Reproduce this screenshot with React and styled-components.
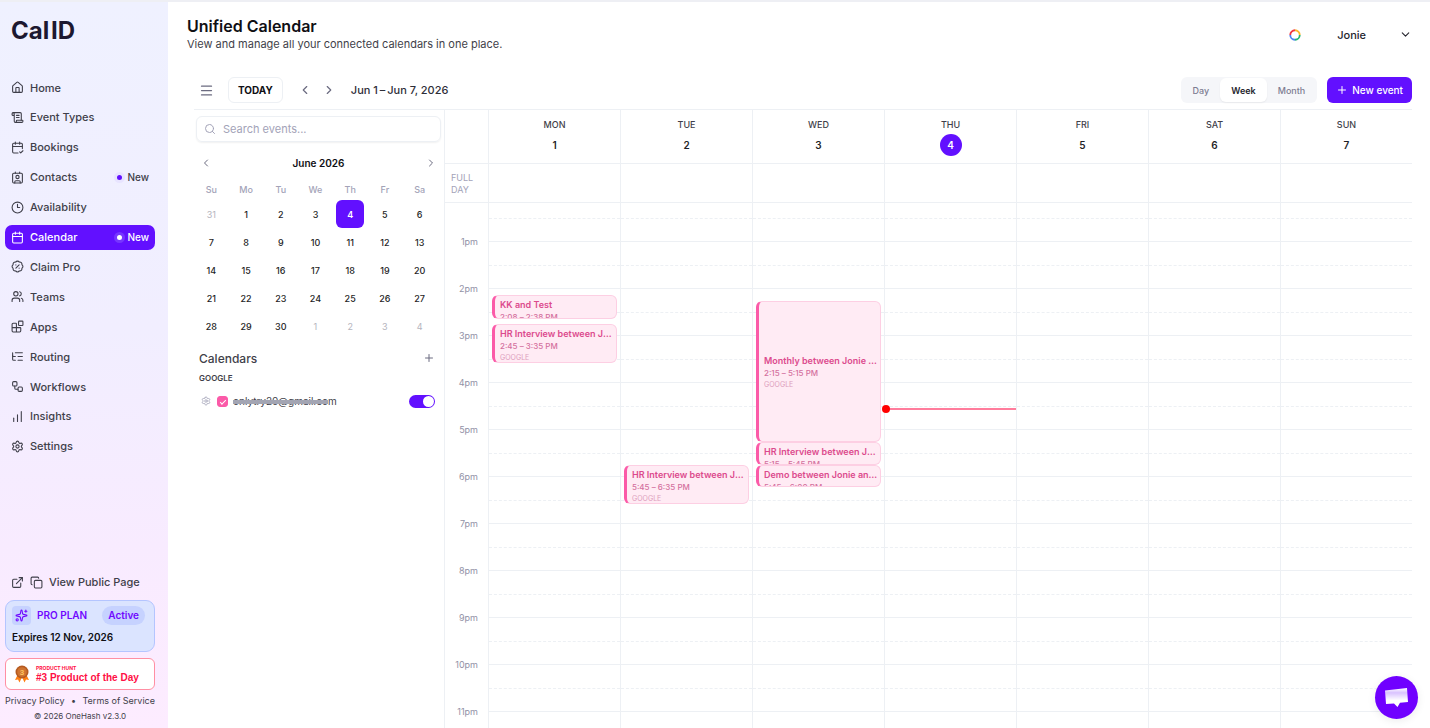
import React, { useState } from "react";
import styled, { createGlobalStyle, css } from "styled-components";
import {
  House, ScrollText, CalendarCheck2, Contact, Clock3, Calendar, BadgePercent, Users, Blocks,
  ListTree, Workflow, ChartNoAxesColumnIncreasing, Settings, ExternalLink, Copy, Sparkles,
  Menu, ChevronLeft, ChevronRight, ChevronDown, Search, Plus,
} from "lucide-react";

const HOUR = 47;
const FIRST_HOUR_OFFSET = 39;

const color = {
  brand: "#6210ff",
  ink: "#0f0f14",
  text: "#3f3f4a",
  muted: "#7d7d92",
  faint: "#a3a3b8",
  line: "#edf0f4",
  pink: "#fb5aa8",
};

const Global = createGlobalStyle`
  *, *::before, *::after { box-sizing: border-box; }
  body { margin: 0; font-family: Inter, "Liberation Sans", sans-serif; color: ${color.text}; background: #fff; }
  button, input { font: inherit; color: inherit; }
  button { border: 0; padding: 0; background: none; cursor: pointer; }
  a { color: inherit; text-decoration: none; }
  h1, h2, h3, p, ul { margin: 0; padding: 0; }
  ul { list-style: none; }
  svg { display: block; flex: none; }
`;

const Shell = styled.div`
  display: flex;
  height: 100vh;
  border-top: 2px solid #eeeff4;
  overflow: hidden;
`;

/* Sidebar */
const Sidebar = styled.aside`
  display: flex;
  flex-direction: column;
  flex: 0 0 168px;
  min-width: 0;
  padding: 16px 13px 6px 5px;
  background: linear-gradient(180deg, #eff1ff 0%, #f1eeff 45%, #f8ebff 75%, #fdecff 100%);
`;
const Logo = styled.a`
  padding-left: 6px;
  font-size: 24px;
  line-height: 26px;
  font-weight: 700;
  color: #1c1830;
`;
const Nav = styled.nav`
  margin-top: 31px;
  flex: 1;
`;
const NavList = styled.ul`
  display: flex;
  flex-direction: column;
  justify-content: space-between;
  height: 384px;
`;
const NavLink = styled.a`
  display: flex;
  align-items: center;
  gap: 6px;
  height: 25px;
  padding: 0 6px;
  border-radius: 7px;
  font-size: 11px;
  font-weight: 500;
  color: ${(p) => (p.$active ? "#fff" : color.text)};
  background: ${(p) => (p.$active ? color.brand : "transparent")};
`;
const NewTag = styled.span`
  display: flex;
  align-items: center;
  gap: 2px;
  margin-left: auto;
  font-size: 10px;
`;
const Dot = styled.span`
  width: 11px;
  height: 11px;
  border: 3px solid ${(p) => (p.$active ? "#7635ff" : "#e8e4ff")};
  border-radius: 50%;
  background: ${(p) => (p.$active ? "#fff" : color.brand)};
`;
const PublicPage = styled.div`
  display: flex;
  align-items: center;
  gap: 6px;
  height: 24px;
  margin-bottom: 6px;
  padding-left: 6px;
  font-size: 11px;
  font-weight: 500;
  & > button { display: flex; }
`;
const PlanCard = styled.section`
  height: 52px;
  padding: 5px 6px;
  border: 1px solid #b4c5ff;
  border-radius: 9px;
  background: #dbe4ff;
  color: ${color.ink};
  font-size: 10px;
  font-weight: 600;
`;
const PlanTop = styled.div`
  display: flex;
  align-items: center;
  gap: 6px;
  margin-bottom: 6px;
  padding-right: 3px;
  color: #7008ff;
  line-height: 19px;
`;
const PlanIcon = styled.span`
  display: grid;
  place-items: center;
  width: 19px;
  height: 19px;
  border-radius: 4px;
  background: #c6d2ff;
`;
const PlanState = styled.span`
  margin-left: auto;
  padding: 0 6px;
  border-radius: 10px;
  background: #c6d2ff;
`;
const HuntCard = styled.a`
  display: flex;
  align-items: center;
  gap: 6px;
  height: 32px;
  margin-top: 6px;
  padding-left: 8px;
  border: 1px solid #ff8fa3;
  border-radius: 6px;
  background: #fff;
  color: #ff0f45;
  font-family: "Liberation Sans", Arial, sans-serif;
  font-weight: 700;
  font-size: 10px;
  line-height: 12px;
`;
const HuntLabel = styled.small`
  display: block;
  font-family: Inter, sans-serif;
  font-size: 5px;
  line-height: 8px;
`;
const Legal = styled.div`
  display: flex;
  justify-content: space-between;
  margin-top: 4px;
  font-size: 9px;
  line-height: 14px;
  white-space: nowrap;
`;
const Copyright = styled.p`
  && { margin-top: 2px; }
  font-size: 8px;
  line-height: 12px;
  text-align: center;
`;

/* Main */
const Main = styled.main`
  display: flex;
  flex-direction: column;
  flex: 1;
  min-width: 0;
  padding: 14px 18px 0 19px;
`;
const PageHeader = styled.header`
  display: flex;
  justify-content: space-between;
  align-items: center;
`;
const Title = styled.h1`
  font-size: 16px;
  line-height: 20px;
  font-weight: 600;
  color: ${color.ink};
`;
const Subtitle = styled.p`
  font-size: 11px;
  line-height: 17px;
`;
const Account = styled.div`
  display: flex;
  align-items: center;
  gap: 36px;
`;
const AccountButton = styled.button`
  display: flex;
  align-items: center;
  gap: 33px;
  color: #25252e;
  font-size: 11px;
  font-weight: 500;
`;
const Toolbar = styled.div`
  display: flex;
  align-items: center;
  margin-left: 7px;
  padding: 24px 0 6px;
  border-bottom: 1px solid ${color.line};
  color: ${color.muted};
`;
const IconButton = styled.button`
  display: grid;
  place-items: center;
  width: ${(p) => p.$size || 24}px;
  height: ${(p) => p.$size || 24}px;
  color: #6b6b80;
`;
const TodayButton = styled.button`
  height: 26px;
  margin: 0 10px;
  padding: 0 9px;
  border: 1px solid ${color.line};
  border-radius: 6px;
  font-size: 10px;
  font-weight: 700;
  color: ${color.ink};
`;
const Range = styled.h2`
  margin-left: 10px;
  font-size: 11px;
  font-weight: 500;
  color: #2e2e38;
`;
const Views = styled.div`
  display: flex;
  height: 26px;
  margin: 0 10px 0 auto;
  padding: 1px;
  border-radius: 6px;
  background: #f5f6f9;
`;
const ViewButton = styled.button`
  padding: 0 11px;
  border-radius: 6px;
  font-size: 9px;
  font-weight: ${(p) => (p.$active ? 600 : 500)};
  color: ${(p) => (p.$active ? "#25252e" : color.muted)};
  background: ${(p) => (p.$active ? "#fff" : "none")};
  box-shadow: ${(p) => (p.$active ? "0 1px 2px #0000000f" : "none")};
`;
const NewEvent = styled.button`
  display: flex;
  align-items: center;
  gap: 4px;
  height: 26px;
  padding: 0 9px;
  border-radius: 6px;
  background: ${color.brand};
  color: #fff;
  font-size: 10px;
  font-weight: 500;
`;
const Workspace = styled.div`
  display: flex;
  flex: 1;
  min-height: 0;
  margin-left: 7px;
`;

/* Left panel */
const Panel = styled.section`
  flex: 0 0 251px;
  padding: 6px 0 0;
  border-right: 1px solid ${color.line};
`;
const SearchBox = styled.label`
  display: flex;
  align-items: center;
  gap: 7px;
  height: 26px;
  margin: 0 3px 0 2px;
  padding: 0 7px;
  border: 1px solid ${color.line};
  border-radius: 6px;
  box-shadow: 0 1px 2px #0000000f;
  color: ${color.faint};
`;
const SearchInput = styled.input`
  flex: 1;
  min-width: 0;
  border: 0;
  outline: 0;
  padding: 0;
  background: none;
  font-size: 11px;
  &::placeholder { color: ${color.faint}; opacity: 1; }
`;
const MonthBar = styled.div`
  display: flex;
  justify-content: space-between;
  align-items: center;
  height: 20px;
  margin: 11px 3px 5px 2px;
  font-size: 10px;
  font-weight: 600;
  color: ${color.ink};
`;
const MonthTable = styled.table`
  width: calc(100% - 7px);
  table-layout: fixed;
  border-collapse: collapse;
  text-align: center;
  th { height: 22px; padding: 0; font-weight: 500; color: ${color.faint}; font-size: 9px; }
  td { height: 28px; padding: 0; }
`;
const DayButton = styled.button`
  display: block;
  width: 28px;
  height: 28px;
  margin: 0 auto;
  border-radius: 6px;
  font-weight: 500;
  font-size: 9px;
  color: #1f1f27;
  ${(p) => p.$outside && css`color: #b4b4bd; font-weight: 400;`}
  ${(p) => p.$today && css`background: ${color.brand}; color: #fff; font-weight: 600;`}
`;
const SectionBar = styled.div`
  display: flex;
  justify-content: space-between;
  align-items: center;
  height: 24px;
  margin: 6px 3px 0 5px;
  font-size: 12px;
  font-weight: 500;
`;
const SectionTitle = styled.h3`
  font-size: inherit;
  font-weight: inherit;
`;
const Provider = styled.p`
  && { padding: 0 5px; }
  font-size: 8px;
  line-height: 16px;
  font-weight: 600;
`;
const CalendarRow = styled.div`
  display: flex;
  align-items: center;
  height: 20px;
  margin-top: 5px;
  padding: 0 9px 0 7px;
  color: ${color.faint};
`;
const Tick = styled.input`
  appearance: none;
  width: 11px;
  height: 11px;
  margin: 0 5px 0 6px;
  border-radius: 3px;
  border: 1px solid ${color.pink};
  display: grid;
  place-items: center;
  &:checked { background: ${color.pink}; }
  &:checked::after {
    content: "";
    width: 6px;
    height: 3px;
    border: solid #fff;
    border-width: 0 0 1px 1px;
    transform: rotate(-45deg);
  }
`;
const Email = styled.label`
  flex: 1;
  font-size: 10px;
  line-height: 14px;
  color: ${color.text};
`;
const Redacted = styled.span`
  text-decoration: line-through;
  text-decoration-thickness: 4px;
  text-decoration-color: #a3a5b3;
`;
const Switch = styled.input`
  appearance: none;
  display: flex;
  width: 26px;
  height: 13px;
  margin: 0;
  padding: 1px;
  border-radius: 7px;
  background: #d4d4dd;
  &::after { content: ""; width: 11px; height: 11px; border-radius: 50%; background: #fff; }
  &:checked { background: ${color.brand}; justify-content: flex-end; }
`;

/* Week grid */
const Week = styled.section`
  display: flex;
  flex-direction: column;
  flex: 1;
  min-width: 0;
`;
const WeekRow = styled.div`
  display: grid;
  grid-template-columns: 43px repeat(7, minmax(0, 1fr));
  flex: none;
  min-height: ${(p) => p.$height}px;
  border-bottom: 1px solid ${color.line};
`;
const WeekCell = styled.div`
  border-left: 1px solid ${color.line};
`;
const DayHead = styled(WeekCell)`
  display: flex;
  flex-direction: column;
  align-items: center;
  padding-top: 8px;
  font-size: 9px;
  line-height: 14px;
  font-weight: 500;
`;
const DayNumber = styled.span`
  display: grid;
  place-items: center;
  width: 22px;
  height: 22px;
  margin-top: 2px;
  border-radius: 50%;
  font-size: 10px;
  font-weight: 600;
  color: ${(p) => (p.$today ? "#fff" : "#1f1f27")};
  background: ${(p) => (p.$today ? color.brand : "none")};
`;
const FullDay = styled.span`
  padding: 8px 0 0 6px;
  width: 36px;
  font-size: 9px;
  line-height: 12px;
  color: ${color.faint};
`;
const Scroller = styled.div`
  flex: 1;
  min-height: 0;
  display: grid;
  grid-template-columns: 43px repeat(7, minmax(0, 1fr));
  align-content: start;
  overflow: auto;
  scrollbar-width: none;
`;
const Hours = styled.div`
  padding-top: ${FIRST_HOUR_OFFSET - 7}px;
`;
const HourLabel = styled.div`
  height: ${HOUR}px;
  padding-right: 10px;
  text-align: right;
  font-size: 9px;
  line-height: 14px;
  color: #9292a6;
`;
const DayColumn = styled.div`
  position: relative;
  border-left: 1px solid ${color.line};
`;
const HalfHour = styled.div`
  height: ${(p) => p.$height}px;
  border-bottom: 1px ${(p) => (p.$dashed ? "dashed" : "solid")} ${color.line};
`;
const EventCard = styled.button`
  position: absolute;
  left: 3px;
  right: 3px;
  top: ${(p) => p.$top}px;
  height: ${(p) => p.$height}px;
  display: flex;
  flex-direction: column;
  justify-content: ${(p) => (p.$tall ? "center" : "flex-start")};
  padding: ${(p) => (p.$tall ? 0 : 3)}px 2px 0 5px;
  border: 1px solid #fdcfe3;
  border-left: 3px solid ${color.pink};
  border-radius: 6px;
  background: #ffebf4;
  text-align: left;
  overflow: hidden;
`;
const EventTitle = styled.strong`
  flex: none;
  width: 100%;
  overflow: hidden;
  white-space: nowrap;
  text-overflow: ellipsis;
  font-size: 9px;
  line-height: 12px;
  font-weight: 600;
  color: #dc4a8d;
`;
const EventTime = styled.span`
  flex: none;
  font-size: 8px;
  line-height: 13px;
  font-weight: 500;
  color: #d4709e;
`;
const EventSource = styled.span`
  flex: none;
  font-size: 7px;
  line-height: 9px;
  color: #dd9dbc;
`;
const NowLine = styled.div`
  position: absolute;
  z-index: 1;
  left: 0;
  right: 0;
  top: ${(p) => p.$top}px;
  height: 2px;
  background: #ff7d9c;
  &::before {
    content: "";
    position: absolute;
    left: -3px;
    top: -3px;
    width: 8px;
    height: 8px;
    border-radius: 50%;
    background: #ff0000;
  }
`;
const ChatButton = styled.button`
  position: fixed;
  right: 12px;
  bottom: 9px;
  display: grid;
  place-items: center;
  width: 43px;
  height: 43px;
  border-radius: 50%;
  background: #7000ff;
  box-shadow: 0 2px 8px #00000014;
`;

const navItems = [
  ["Home", House], ["Event Types", ScrollText], ["Bookings", CalendarCheck2],
  ["Contacts", Contact, true], ["Availability", Clock3], ["Calendar", Calendar, true],
  ["Claim Pro", BadgePercent], ["Teams", Users], ["Apps", Blocks], ["Routing", ListTree],
  ["Workflows", Workflow], ["Insights", ChartNoAxesColumnIncreasing], ["Settings", Settings],
];

const weekDays = ["MON", "TUE", "WED", "THU", "FRI", "SAT", "SUN"];
const hours = Array.from({ length: 11 }, (_, i) => `${i + 1}pm`);

const events = [
  { day: 0, start: 128, end: 158, title: "KK and Test", time: "2:08 – 2:38 PM" },
  { day: 0, start: 165, end: 215, title: "HR Interview between Jonie and KK", time: "2:45 – 3:35 PM" },
  { day: 1, start: 345, end: 395, title: "HR Interview between Jonie and KK", time: "5:45 – 6:35 PM" },
  { day: 2, start: 135, end: 315, title: "Monthly between Jonie and KK", time: "2:15 – 5:15 PM" },
  { day: 2, start: 315, end: 345, title: "HR Interview between Jonie and KK", time: "5:15 – 5:45 PM" },
  { day: 2, start: 345, end: 373, title: "Demo between Jonie and KK", time: "5:45 – 6:00 PM" },
];

const monthWeeks = Array.from({ length: 5 }, (_, w) =>
  Array.from({ length: 7 }, (_, d) => {
    const n = w * 7 + d;
    if (n === 0) return { label: 31, outside: true };
    return n > 30 ? { label: n - 30, outside: true } : { label: n, today: n === 4 };
  })
);

const minuteTop = (m) => Math.round(FIRST_HOUR_OFFSET + ((m - 60) * HOUR) / 60);

function Medal() {
  return (
    <svg width="16" height="18" viewBox="0 0 16 18">
      <path d="M4 9 1 15l3-.5L5.500 17.500 8 12l2.500 5.500L12 14.500l3 .5-3-6z" fill="#ff7f11" />
      <circle cx="8" cy="7" r="6.500" fill="#b55a20" />
      <circle cx="8" cy="7" r="4.800" fill="#cf7430" />
      <text x="8" y="10" textAnchor="middle" fontSize="8" fontWeight="700" fill="#ffc45c">3</text>
    </svg>
  );
}

function GoogleRing() {
  return (
    <svg width="12" height="12" viewBox="0 0 12 12" fill="none" strokeWidth="1.800">
      <path d="M1.250 6A4.750 4.750 0 0 1 6 1.250" stroke="#f0353f" />
      <path d="M6 1.250A4.750 4.750 0 0 1 10.750 6" stroke="#fbb72c" />
      <path d="M10.750 6A4.750 4.750 0 0 1 6 10.750" stroke="#22b573" />
      <path d="M6 10.750A4.750 4.750 0 0 1 1.250 6" stroke="#4a83f0" />
    </svg>
  );
}

function ChatGlyph() {
  return (
    <svg width="25" height="21" viewBox="0 0 25 21">
      <defs>
        <linearGradient id="chat" x1="0" y1="0" x2="0" y2="1">
          <stop offset="0" stopColor="#fff" />
          <stop offset="0.250" stopColor="#d9c2ff" />
          <stop offset="0.650" stopColor="#fff" />
        </linearGradient>
      </defs>
      <path d="M1 3.500 23 1l1 14-8 .8L13.500 20 10 16.500 2 17z" fill="url(#chat)" />
    </svg>
  );
}

function SideNav() {
  return (
    <Sidebar>
      <Logo href="#">{"Cal\u200AID"}</Logo>
      <Nav>
        <NavList>
          {navItems.map(([label, Icon, isNew]) => {
            const active = label === "Calendar";
            return (
              <li key={label}>
                <NavLink href="#" $active={active}>
                  <Icon size={13} />
                  {label}
                  {isNew && <NewTag><Dot $active={active} />New</NewTag>}
                </NavLink>
              </li>
            );
          })}
        </NavList>
      </Nav>
      <PublicPage>
        <ExternalLink size={13} />
        <button aria-label="Copy link"><Copy size={13} /></button>
        <a href="#">View Public Page</a>
      </PublicPage>
      <PlanCard>
        <PlanTop>
          <PlanIcon><Sparkles size={13} /></PlanIcon>
          PRO PLAN
          <PlanState>Active</PlanState>
        </PlanTop>
        <p>Expires 12 Nov, 2026</p>
      </PlanCard>
      <HuntCard href="#">
        <Medal />
        <span><HuntLabel>PRODUCT HUNT</HuntLabel>#3 Product of the Day</span>
      </HuntCard>
      <Legal>
        <a href="#">Privacy Policy</a><span>•</span><a href="#">Terms of Service</a>
      </Legal>
      <Copyright>© 2026 OneHash v2.3.0</Copyright>
    </Sidebar>
  );
}

function SidePanel() {
  const [checked, setChecked] = useState(true);
  const [synced, setSynced] = useState(true);
  return (
    <Panel>
      <SearchBox>
        <Search size={12} />
        <SearchInput type="search" aria-label="Search events" placeholder="Search events..." />
      </SearchBox>
      <MonthBar>
        <IconButton $size={20} aria-label="Previous month"><ChevronLeft size={12} /></IconButton>
        June 2026
        <IconButton $size={20} aria-label="Next month"><ChevronRight size={12} /></IconButton>
      </MonthBar>
      <MonthTable>
        <thead>
          <tr>{["Su", "Mo", "Tu", "We", "Th", "Fr", "Sa"].map((d) => <th key={d} scope="col">{d}</th>)}</tr>
        </thead>
        <tbody>
          {monthWeeks.map((week, i) => (
            <tr key={i}>
              {week.map((d, j) => (
                <td key={j}><DayButton $today={d.today} $outside={d.outside}>{d.label}</DayButton></td>
              ))}
            </tr>
          ))}
        </tbody>
      </MonthTable>
      <SectionBar>
        <SectionTitle>Calendars</SectionTitle>
        <IconButton aria-label="Add calendar"><Plus size={12} /></IconButton>
      </SectionBar>
      <Provider>GOOGLE</Provider>
      <CalendarRow>
        <Settings size={10} />
        <Tick id="account" type="checkbox" checked={checked} onChange={() => setChecked(!checked)} />
        <Email htmlFor="account"><Redacted>onlytry20@gmail.co</Redacted>m</Email>
        <Switch type="checkbox" role="switch" aria-label="Sync calendar" checked={synced} onChange={() => setSynced(!synced)} />
      </CalendarRow>
    </Panel>
  );
}

function WeekGrid() {
  return (
    <Week>
      <WeekRow $height={54}>
        <span />
        {weekDays.map((d, i) => (
          <DayHead key={d}>{d}<DayNumber $today={i === 3}>{i + 1}</DayNumber></DayHead>
        ))}
      </WeekRow>
      <WeekRow $height={39}>
        <FullDay>FULL DAY</FullDay>
        {weekDays.map((d) => <WeekCell key={d} />)}
      </WeekRow>
      <Scroller>
        <Hours>{hours.map((h) => <HourLabel key={h}>{h}</HourLabel>)}</Hours>
        {weekDays.map((d, day) => (
          <DayColumn key={d}>
            <HalfHour $height={16} $dashed />
            <HalfHour $height={23} />
            {hours.map((h) => (
              <React.Fragment key={h}>
                <HalfHour $height={24} $dashed />
                <HalfHour $height={23} />
              </React.Fragment>
            ))}
            {events.filter((e) => e.day === day).map((e) => (
              <EventCard
                key={e.start}
                $top={minuteTop(e.start)}
                $height={minuteTop(e.end) - minuteTop(e.start)}
                $tall={e.end - e.start > 60}
              >
                <EventTitle>{e.title}</EventTitle>
                <EventTime>{e.time}</EventTime>
                <EventSource>GOOGLE</EventSource>
              </EventCard>
            ))}
            {day === 3 && <NowLine $top={minuteTop(272)} />}
          </DayColumn>
        ))}
      </Scroller>
    </Week>
  );
}

export default function App() {
  const [view, setView] = useState("Week");
  return (
    <>
      <Global />
      <Shell>
        <SideNav />
        <Main>
          <PageHeader>
            <div>
              <Title>Unified Calendar</Title>
              <Subtitle>View and manage all your connected calendars in one place.</Subtitle>
            </div>
            <Account>
              <GoogleRing />
              <AccountButton>Jonie<ChevronDown size={13} /></AccountButton>
            </Account>
          </PageHeader>
          <Toolbar>
            <IconButton aria-label="Toggle panel"><Menu size={15} /></IconButton>
            <TodayButton>TODAY</TodayButton>
            <IconButton aria-label="Previous week"><ChevronLeft size={14} /></IconButton>
            <IconButton aria-label="Next week"><ChevronRight size={14} /></IconButton>
            <Range>{"Jun 1\u2009–\u2009Jun 7, 2026"}</Range>
            <Views>
              {["Day", "Week", "Month"].map((v) => (
                <ViewButton key={v} $active={v === view} onClick={() => setView(v)}>{v}</ViewButton>
              ))}
            </Views>
            <NewEvent><Plus size={12} />New event</NewEvent>
          </Toolbar>
          <Workspace>
            <SidePanel />
            <WeekGrid />
          </Workspace>
        </Main>
      </Shell>
      <ChatButton aria-label="Open chat"><ChatGlyph /></ChatButton>
    </>
  );
}
